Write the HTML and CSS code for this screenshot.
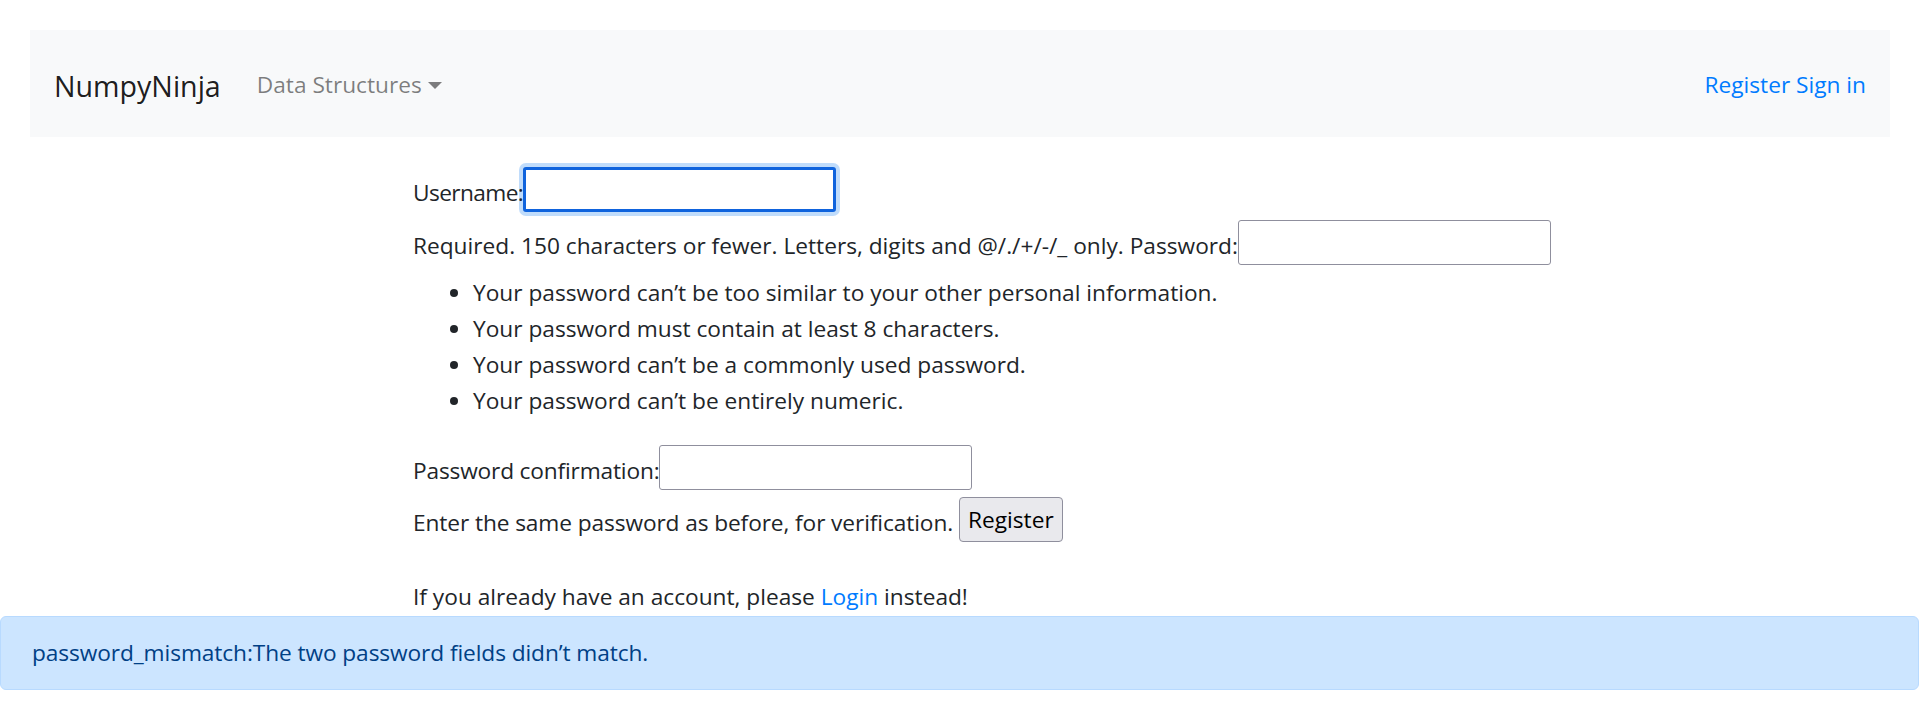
FILE: index.html
```html
<!DOCTYPE html>
<html lang="en">
<head>
<meta charset="utf-8">
<title>Register - NumpyNinja</title>
<link rel="stylesheet" href="styles.css">
</head>
<body>
<nav class="navbar">
  <div class="nav-left">
    <a class="brand" href="#">NumpyNinja</a>
    <a class="nav-link" href="#">Data Structures<span class="caret"></span></a>
  </div>
  <div class="nav-right">
    <a class="nav-auth" href="#">Register</a> <a class="nav-auth" href="#">Sign in</a>
  </div>
</nav>

<main class="content">
  <form class="reg-form">
    <div class="row">
      <label class="label-user" for="id_username">Username:</label><input id="id_username" class="field is-focused" type="text">
    </div>
    <div class="row">
      <span class="help">Required. 150 characters or fewer. Letters, digits and @/./+/-/_ only.</span><label for="id_password1">Password:</label><input id="id_password1" class="field" type="password">
    </div>
    <ul class="rules">
      <li>Your password can’t be too similar to your other personal information.</li>
      <li>Your password must contain at least 8 characters.</li>
      <li>Your password can’t be a commonly used password.</li>
      <li>Your password can’t be entirely numeric.</li>
    </ul>
    <div class="row">
      <label class="label-confirm" for="id_password2">Password confirmation:</label><input id="id_password2" class="field" type="password">
    </div>
    <div class="row row-submit">
      <span class="help help-confirm">Enter the same password as before, for verification.</span><button class="submit" type="button">Register</button>
    </div>
  </form>
  <p class="login-note">If you already have an account, please <a href="#">Login</a> instead!</p>
</main>

<div class="alert">password_mismatch:The two password fields didn’t match.</div>
</body>
</html>
```

FILE: styles.css
```css
html, body {
  margin: 0;
  padding: 0;
}

body {
  font-family: "Open Sans", "Noto Sans", sans-serif;
  font-size: 22.7px;
  line-height: 36px;
  color: #212529;
  background: #ffffff;
}

a {
  color: #007bff;
  text-decoration: none;
}

/* Navbar */
.navbar {
  margin: 30px 30px 0;
  height: 107px;
  box-sizing: border-box;
  padding: 3px 24px 0;
  background: #f8f9fa;
  display: flex;
  align-items: center;
  justify-content: space-between;
}

.nav-left {
  display: flex;
  align-items: center;
}

.brand {
  font-size: 28.6px;
  line-height: 45px;
  color: rgba(0, 0, 0, 0.9);
  margin-right: 24px;
}

.nav-link {
  color: rgba(0, 0, 0, 0.5);
  padding: 0 12px;
  display: inline-flex;
  align-items: center;
}

.caret {
  display: inline-block;
  margin-left: 6px;
  margin-top: 1px;
  width: 0;
  height: 0;
  border-top: 7px solid;
  border-left: 7px solid transparent;
  border-right: 7px solid transparent;
}

.nav-auth {
  color: #007bff;
}

/* Form content */
.content {
  margin-left: 413px;
  padding-top: 30px;
}

.reg-form {
  margin: 0;
}

.row {
  display: flex;
  align-items: flex-start;
  height: 52.5px;
  white-space: nowrap;
}

.row label,
.row .help {
  line-height: 45px;
  padding-top: 3px;
}

.row .help {
  margin-right: 0.26em;
}

.label-user {
  position: relative;
  z-index: 1;
  letter-spacing: -0.6px;
}

.label-confirm {
  letter-spacing: -0.17px;
}

.help-confirm {
  letter-spacing: -0.1px;
}

.row-submit {
  height: 45px;
}

.field {
  box-sizing: border-box;
  width: 313px;
  height: 45px;
  margin: 0;
  padding: 1px 3px;
  border: 1px solid #8f8f9d;
  border-radius: 3px;
  background: #ffffff;
  font: inherit;
  color: #000;
  outline: none;
}

.field.is-focused {
  border: 3px solid #0f63dd;
  box-shadow: 0 0 0 4px rgba(24, 125, 242, 0.27);
}

.rules {
  margin: 3px 0 25.5px;
  padding-left: 60px;
}

.rules li {
  line-height: 36px;
}

.submit {
  box-sizing: border-box;
  height: 45px;
  margin: 0;
  padding: 1px 8px 0;
  border: 1px solid #8f8f9d;
  border-radius: 4px;
  background: #e9e9ed;
  color: #000;
  font: inherit;
  line-height: 36px;
}

.login-note {
  margin: 36.5px 0 0;
}

/* Alert */
.alert {
  margin: 1px 1px 0 0;
  padding: 18px 31px;
  border: 1px solid #b8daff;
  border-radius: 6px;
  background: #cce5ff;
  color: #004085;
  letter-spacing: -0.09px;
}
```
